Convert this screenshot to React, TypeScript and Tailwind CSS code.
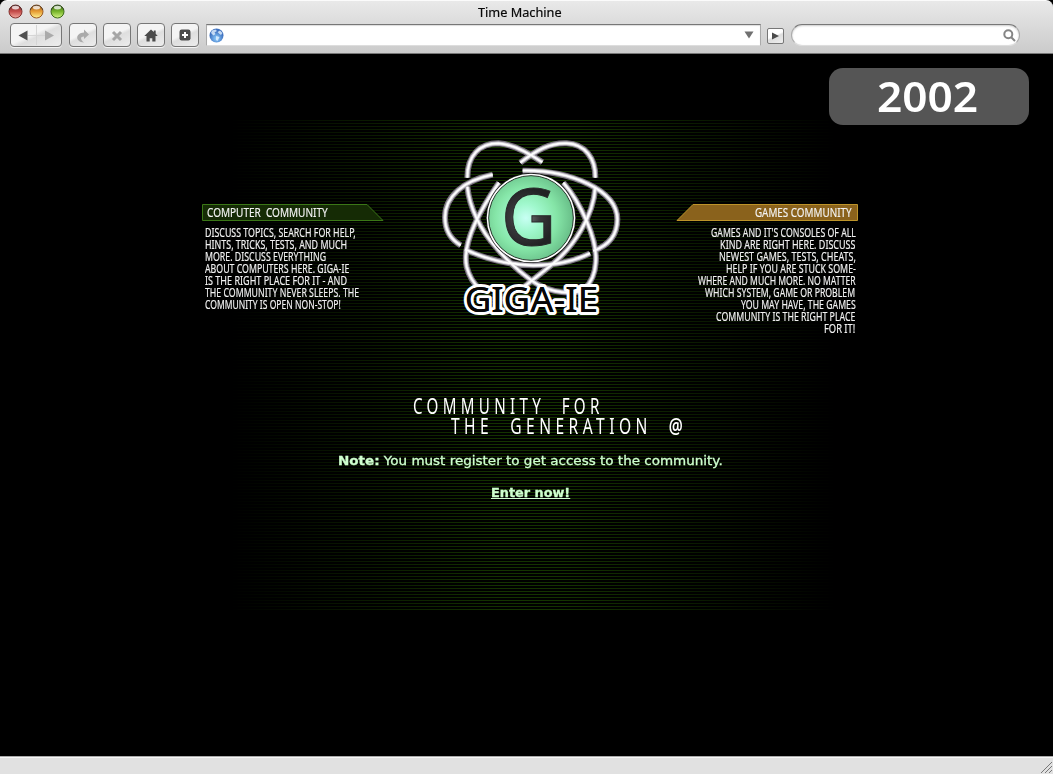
import { useLayoutEffect, useRef, useState } from "react";
import type { ReactNode } from "react";

/* Text squeezed or stretched horizontally to an exact line width. */
function FitText({ width, align = "left", children }: { width: number; align?: "left" | "right"; children: ReactNode }) {
  const ref = useRef<HTMLSpanElement>(null);
  const [scale, setScale] = useState(1);
  useLayoutEffect(() => {
    if (ref.current) setScale(width / ref.current.offsetWidth);
  }, [width]);
  return (
    <span className={align === "right" ? "flex justify-end" : "flex justify-start"}>
      <span
        ref={ref}
        className={align === "right" ? "shrink-0 origin-right whitespace-pre" : "shrink-0 origin-left whitespace-pre"}
        style={{ transform: `scaleX(${scale})` }}
      >
        {children}
      </span>
    </span>
  );
}

const computerLines: [string, number][] = [
  ["DISCUSS TOPICS, SEARCH FOR HELP,", 151],
  ["HINTS, TRICKS, TESTS, AND MUCH", 142],
  ["MORE. DISCUSS EVERYTHING", 121],
  ["ABOUT COMPUTERS HERE. GIGA-IE", 144],
  ["IS THE RIGHT PLACE FOR IT - AND", 142],
  ["THE COMMUNITY NEVER SLEEPS. THE", 154],
  ["COMMUNITY IS OPEN NON-STOP!", 136],
];

const gamesLines: [string, number][] = [
  ["GAMES AND IT'S CONSOLES OF ALL", 145],
  ["KIND ARE RIGHT HERE. DISCUSS", 135],
  ["NEWEST GAMES, TESTS, CHEATS,", 137],
  ["HELP IF YOU ARE STUCK SOME-", 130],
  ["WHERE AND MUCH MORE. NO MATTER", 158],
  ["WHICH SYSTEM, GAME OR PROBLEM", 150],
  ["YOU MAY HAVE, THE GAMES", 115],
  ["COMMUNITY IS THE RIGHT PLACE", 139],
  ["FOR IT!", 31],
];

const orbits = [
  "M112 143C112 75 150 40 205 40C250 42 300 72 337 97",
  "M271 98C320 60 360 38 410 40C465 42 497 85 496 143",
  "M188 134C100 152 45 200 45 262C45 302 65 330 92 346",
  "M278 122C420 120 562 180 562 268C562 310 540 345 490 363",
  "M105 358C160 385 240 406 310 406C370 406 430 395 480 370",
  "M112 170C118 230 150 300 200 354C230 390 268 425 305 452C345 480 400 495 450 484",
  "M207 158C150 240 95 340 110 410C115 430 125 455 150 478",
  "M400 158C450 215 505 330 497 400C495 430 485 455 465 475",
  "M496 172C490 260 430 350 370 400C340 425 320 440 285 468",
];

function Logo() {
  return (
    <svg className="h-[200px] w-[200px]" viewBox="0 0 600 600" fill="none">
      <defs>
        <radialGradient id="orb" cx="0.44" cy="0.5" r="0.56">
          <stop offset="0" stopColor="#c8fff4" />
          <stop offset="0.3" stopColor="#a0f8cd" />
          <stop offset="0.65" stopColor="#85e5a7" />
          <stop offset="1" stopColor="#68be88" />
        </radialGradient>
        <radialGradient id="glyph" gradientUnits="userSpaceOnUse" cx="285" cy="265" r="90">
          <stop offset="0" stopColor="#77777b" />
          <stop offset="0.5" stopColor="#37373a" />
          <stop offset="1" stopColor="#222224" />
        </radialGradient>
        <filter id="soft" x="-10%" y="-10%" width="120%" height="120%">
          <feGaussianBlur stdDeviation="2" />
        </filter>
      </defs>
      <g stroke="#77727c" strokeWidth="18" filter="url(#soft)">
        {orbits.map((d) => <path key={d} d={d} />)}
      </g>
      <g stroke="#d4d1d8" strokeWidth="11">
        {orbits.map((d) => <path key={d} d={d} />)}
      </g>
      <g stroke="#fff" strokeWidth="5">
        {orbits.map((d) => <path key={d} d={d} />)}
      </g>
      <circle cx="303" cy="264" r="135" fill="#171717" />
      <circle cx="303" cy="264" r="133" fill="#fff" />
      <circle cx="303" cy="264" r="127" fill="url(#orb)" stroke="#26382c" strokeWidth="3" />
      <text x="213" y="346" fontSize="236" textLength="166" lengthAdjust="spacingAndGlyphs" fill="url(#glyph)" className="font-['Noto_Sans',sans-serif] [stroke:#28282a] [stroke-width:3px]">
        G
      </text>
      <text x="104" y="546" fontSize="106" textLength="400" lengthAdjust="spacingAndGlyphs" fill="#080808" className="font-['Noto_Sans',sans-serif] [paint-order:stroke] [stroke-linejoin:round] [stroke-width:18px] [stroke:#fff]">
        GIGA-IE
      </text>
      <text x="104" y="546" fontSize="106" textLength="400" lengthAdjust="spacingAndGlyphs" fill="#080808" aria-hidden="true" className="font-['Noto_Sans',sans-serif]">
        GIGA-IE
      </text>
    </svg>
  );
}

function Light({ id, dark, mid, light }: { id: string; dark: string; mid: string; light: string }) {
  return (
    <svg className="h-[15px] w-[15px]" viewBox="0 0 15 15">
      <defs>
        <linearGradient id={id} x1="0" y1="0" x2="0" y2="1">
          <stop offset="0" stopColor={dark} />
          <stop offset="0.5" stopColor={mid} />
          <stop offset="1" stopColor={light} />
        </linearGradient>
      </defs>
      <circle cx="7.5" cy="7.5" r="6.5" fill={`url(#${id})`} stroke={dark} strokeWidth="1" />
      <path d="M1.300 6A6.500 6.500 0 0 1 13.700 6" fill="none" stroke="#333" strokeOpacity="0.65" />
      <ellipse cx="7.5" cy="3.600" rx="3.6" ry="1.9" fill="#fff" opacity="0.75" />
    </svg>
  );
}

const button =
  "flex h-[24px] items-center justify-center rounded-[4px] border border-[#777] bg-linear-[155deg,#f4f4f4_45%,#dedede_55%,#ededed] shadow-[0_1px_0_#f3f3f3]";

function Toolbar() {
  return (
    <header className="h-[54px] shrink-0 rounded-t-[7px] border-t border-b border-t-[#fbfbfb] border-b-[#777] bg-linear-to-b from-[#e9e9e9] to-[#cbcbcb]">
      <div className="flex h-[22px] items-center">
        <div className="flex w-[203px] gap-[6px] pb-[2px] pl-[7.5px]">
          <Light id="close" dark="#84302d" mid="#c54d4b" light="#f3aaa0" />
          <Light id="minimise" dark="#9a5a20" mid="#e79d35" light="#fff492" />
          <Light id="zoom" dark="#3c6b17" mid="#77b52c" light="#d5f585" />
        </div>
        <h1 className="flex w-[636px] justify-center font-['Noto_Sans',sans-serif] text-[13px] leading-[22px] text-[#080808] [-webkit-text-stroke:0.2px_#080808]">
          <FitText width={84}>Time Machine</FitText>
        </h1>
      </div>
      <div className="flex h-[24px] pl-[10px]">
        <div className={`${button} w-[52px]`}>
          <svg className="h-[22px] w-[50px]" viewBox="0 0 50 22">
            <path d="M25.5 1V21M17 11.5H34" stroke="#d5d5d5" />
            <path d="M7.500 11.500L16.500 6.500V16.500Z" fill="#505050" />
            <path d="M43 11.500L34 6.500V16.500Z" fill="#aaa" />
          </svg>
        </div>
        <div className={`${button} ml-[7px] w-[28px]`}>
          <svg className="mt-px h-[18px] w-[18px]" viewBox="0 0 18 18">
            <path d="M10 2.500L15 7.500L10 12V9.500C6 9.500 6 12.500 10 15.500C1 15 1 6 10 5.500Z" fill="#aaa" />
          </svg>
        </div>
        <div className={`${button} ml-[6px] w-[28px]`}>
          <svg className="mt-px h-[12px] w-[12px]" viewBox="0 0 12 12">
            <path d="M2 2L10 10M10 2L2 10" stroke="#a5a5a5" strokeWidth="3" />
          </svg>
        </div>
        <div className={`${button} ml-[6px] w-[28px]`}>
          <svg className="h-[13px] w-[14px]" viewBox="0 0 14 13">
            <path d="M7 .4L9.800 3V1.600H11.700V4.700L13.700 7H11.500V12.500H8.300V9.300H5.700V12.500H2.500V7H.3Z" fill="#4b4b4b" />
          </svg>
        </div>
        <div className={`${button} ml-[6px] w-[28px]`}>
          <svg className="h-[12px] w-[12px]" viewBox="0 0 12 12">
            <rect x="0.5" y="0.5" width="11" height="11" rx="2.200" fill="#4b4b4b" />
            <path d="M6 3V9M3 6H9" stroke="#fff" strokeWidth="2" />
          </svg>
        </div>
        <div className="mt-px ml-[7px] flex h-[22px] w-[555px] items-center justify-between border border-t-[#777] border-r-[#aaa] border-b-[#ddd] border-l-[#aaa] bg-white pr-[6px] pl-[2px] shadow-[inset_0_1px_1px_#ddd]">
          <svg className="h-[15px] w-[15px]" viewBox="0 0 15 15">
            <defs>
              <radialGradient id="globe" cx="0.5" cy="0.7">
                <stop stopColor="#91d0ff" />
                <stop offset="1" stopColor="#3f72c0" />
              </radialGradient>
            </defs>
            <circle cx="7.500" cy="7.500" r="7" fill="url(#globe)" />
            <path d="M3 2.500L6.500 1.500L8 3L5.500 4.500L6.500 6L4.500 7.500L2 5ZM8.500 4L11 2.500L13.500 5L12 7L10.500 6ZM7 8L10.500 9L8.500 13L7 12Z" fill="#e5f3ff" opacity="0.8" />
          </svg>
          <svg className="h-[8px] w-[10px]" viewBox="0 0 10 8">
            <path d="M.5.5H9.500L5 7.500Z" fill="#707070" />
          </svg>
        </div>
        <div className="mt-[5px] ml-[6px] flex h-[16px] w-[17px] items-center justify-center rounded-[2px] border border-[#777] bg-linear-[155deg,#fff_45%,#dedede_55%,#efefef]">
          <svg className="h-[8px] w-[7px]" viewBox="0 0 7 8">
            <path d="M0 .5L7 4L0 7.500Z" fill="#4b4b4b" />
          </svg>
        </div>
        <div className="mt-px ml-[7px] flex h-[22px] w-[229px] items-center justify-end rounded-full border border-t-[#777] border-r-[#aaa] border-b-[#ddd] border-l-[#aaa] bg-white pr-[3px] shadow-[inset_0_1px_2px_#ccc]">
          <svg className="h-[13px] w-[13px]" viewBox="0 0 13 13" fill="none" stroke="#858585" strokeWidth="2">
            <circle cx="5.300" cy="5.300" r="4" />
            <path d="M8.200 8.200L12 12" />
          </svg>
        </div>
      </div>
    </header>
  );
}

function ComputerColumn() {
  return (
    <section className="mt-[74px] w-[182px] [-webkit-text-stroke:0.15px_currentColor]">
      <div className="grid h-[17px]">
        <svg className="col-start-1 row-start-1 h-[17px] w-[182px]" viewBox="0 0 182 17">
          <path d="M.5.500H165L181 16.500H.5Z" fill="#152b05" stroke="#3b7717" />
        </svg>
        <h2 className="z-10 col-start-1 row-start-1 pl-[5px] text-[12px] leading-[17px]">
          <FitText width={121}>COMPUTER  COMMUNITY</FitText>
        </h2>
      </div>
      <div className="mt-[6px] pl-[3px] text-[12px] leading-[12px]">
        {computerLines.map(([line, width]) => (
          <FitText key={line} width={width}>{line}</FitText>
        ))}
      </div>
    </section>
  );
}

function GamesColumn() {
  return (
    <section className="mt-[74px] w-[182px] [-webkit-text-stroke:0.15px_currentColor]">
      <div className="grid h-[17px]">
        <svg className="col-start-1 row-start-1 h-[17px] w-[182px]" viewBox="0 0 182 17">
          <path d="M181.500.500H17L1 16.500H181.500Z" fill="#8a621c" stroke="#bd942a" />
        </svg>
        <h2 className="z-10 col-start-1 row-start-1 pr-[6px] text-[12px] leading-[17px]">
          <FitText width={97} align="right">GAMES COMMUNITY</FitText>
        </h2>
      </div>
      <div className="mt-[6px] pr-[2.5px] text-[12px] leading-[12px]">
        {gamesLines.map(([line, width]) => (
          <FitText key={line} width={width} align="right">{line}</FitText>
        ))}
      </div>
    </section>
  );
}

export default function App() {
  return (
    <div className="flex h-[774px] w-[1053px] flex-col overflow-hidden bg-black">
      <Toolbar />
      <main className="relative isolate h-[702px] shrink-0 font-['Noto_Sans',sans-serif] text-[#f2f2f2]">
        <div className="absolute top-[66px] left-[230px] -z-10 h-[490px] w-[606px] bg-[repeating-linear-gradient(to_bottom,#143300_0px,#143300_1px,transparent_1px,transparent_3px)] mask-[linear-gradient(to_right,transparent,black_45%,black_55%,transparent)]" />
        <div className="absolute top-[14px] right-[24px] flex h-[57px] w-[200px] items-center justify-center rounded-[14px] bg-[#555] pr-[8px] pb-[2px] text-[42px] leading-[55px] font-semibold text-white">
          <FitText width={101}>2002</FitText>
        </div>
        <div className="flex gap-[46px] pt-[76px] pl-[202px]">
          <ComputerColumn />
          <Logo />
          <GamesColumn />
        </div>
        <div className="mt-[61px] pl-[413px] text-[21px] leading-[20px] text-white">
          <FitText width={191}>
            <span className="tracking-[6px]">COMMUNITY  FOR</span>
          </FitText>
          <div className="h-[20px] pl-[38px]">
            <FitText width={236}>
              <span className="tracking-[6px]">THE  GENERATION  <b className="font-semibold">@</b></span>
            </FitText>
          </div>
        </div>
        <div className="mt-[16px] pl-[338px] font-['DejaVu_Sans',sans-serif] text-[13px] leading-[18px] text-[#cfffcf] [-webkit-text-stroke:0.3px_currentColor]">
          <FitText width={385}>
            <b>Note:</b> You must register to get access to the community.
          </FitText>
          <div className="mt-[14px] flex pl-[153px]">
            <a href="#enter" className="font-bold underline">
              <FitText width={79}>Enter now!</FitText>
            </a>
          </div>
        </div>
      </main>
      <footer className="flex h-[18px] shrink-0 items-end justify-end border-t border-[#aaa] bg-[#e1e1e1] shadow-[inset_0_1px_0_#f7f7f7]">
        <svg className="h-[13px] w-[13px]" viewBox="0 0 13 13" stroke="#777">
          <path d="M1 12L12 1M5 12L12 5M9 12L12 9" />
        </svg>
      </footer>
    </div>
  );
}
